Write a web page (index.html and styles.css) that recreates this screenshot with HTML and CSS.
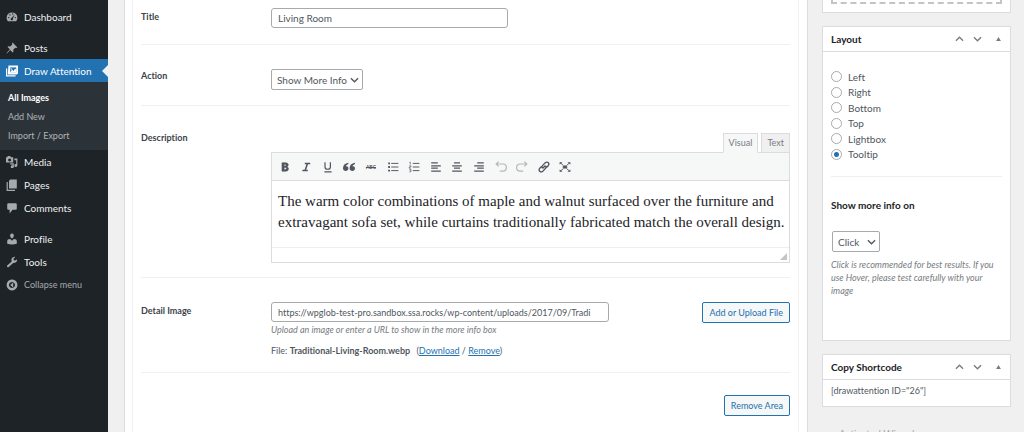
FILE: index.html
```html
<!DOCTYPE html>
<html lang="en">
<head>
<meta charset="utf-8">
<title>Edit Image</title>
<link rel="stylesheet" href="styles.css">
</head>
<body>
<svg class="defs" aria-hidden="true">
  <symbol id="up" viewBox="0 0 10 6"><path d="M1 5l4-4 4 4" fill="none" stroke="currentColor" stroke-width="1.5"/></symbol>
  <symbol id="down" viewBox="0 0 10 6"><path d="M1 1l4 4 4-4" fill="none" stroke="currentColor" stroke-width="1.5"/></symbol>
  <symbol id="tri" viewBox="0 0 6 5"><path d="M3 0l3 5H0z" fill="currentColor"/></symbol>
</svg>
<div class="app">
  <nav class="menu" aria-label="Main menu">
    <a class="item" href="#"><svg viewBox="0 0 20 20"><path d="M3 17a9 9 0 1 1 14 0z"/><g fill="#1d2327"><circle cx="4.500" cy="11" r="1.200"/><circle cx="6.500" cy="6.500" r="1.200"/><circle cx="11" cy="4.800" r="1.200"/><circle cx="15.500" cy="11" r="1.200"/><path d="M14.500 5.500l-3 7a2 2 0 1 1-2.200-1z"/></g></svg>Dashboard</a>
    <a class="item spaced" href="#"><svg viewBox="0 0 20 20"><path d="M11 1l8 8-2 1-1.500-.5-3.500 3.500.5 3-1.500 1.500-4-4L1.500 19 1 18.500 6.500 12 2.500 8.500 4 7l3 .5L10.500 4 10 2.500z"/></svg>Posts</a>
    <a class="item current" href="#"><svg viewBox="0 0 20 20"><path d="M4 1h16v13l-2 2H3z"/><path d="M1 6v12h15" fill="none" stroke="#fff" stroke-width="2"/><path d="M7 4h10v8H7z" fill="#2271b1"/><path d="M7 12l3-4 3 2 2-4 2 2v4zM8 5l3 2-3 1z"/></svg>Draw Attention</a>
    <div class="submenu"><a class="on" href="#">All Images</a><a href="#">Add New</a><a href="#">Import / Export</a></div>
    <a class="item" href="#"><svg viewBox="0 0 20 20"><path fill-rule="evenodd" d="M0 2h2l1-2h4l1 2h4v9H0zM6 4a2.500 2.500 0 1 0 .1 0z"/><path d="M14 4h5v12a2.500 2.500 0 1 1-2-2.500V7h-3zM7 12h6v6a2.500 2.500 0 1 1-2-2.500V14H7z"/></svg>Media</a>
    <a class="item" href="#"><svg viewBox="0 0 20 20"><path d="M7 1h11v15H5V3zM3 5v13h12v2H1V5z"/></svg>Pages</a>
    <a class="item" href="#"><svg viewBox="0 0 20 20"><path d="M4 2h12q2 0 2 2v7q0 2-2 2h-5l-5 6v-6H4q-2 0-2-2V4q0-2 2-2z"/></svg>Comments</a>
    <a class="item spaced" href="#"><svg viewBox="0 0 20 20"><path d="M10 1c5 0 3 8 0 8s-5-8 0-8zM2 18v-4q0-4 5-4l3 3 3-3q5 0 5 4v4q-8 2-16 0z"/></svg>Profile</a>
    <a class="item" href="#"><svg viewBox="0 0 20 20"><path d="M18.500 5.500q.5 6-6.500 6l-7.500 7q-2 1-3-1 0-1 1-2L9.500 9Q8 3 12 2q2-1 3.500-.5L12.500 4.500l.5 2.500 2.500.5z"/></svg>Tools</a>
    <button class="item collapse" type="button"><svg viewBox="0 0 20 20"><path fill-rule="evenodd" d="M10 1a9 9 0 1 0 .1 0zM10 5a5 5 0 1 1-.1 0z"/><path d="M12 6v8l-5-4z"/></svg>Collapse menu</button>
  </nav>
  <main class="main">
    <div class="group">
      <div class="row"><label class="name" for="title">Title</label><div class="field"><input id="title" class="text title" type="text" value="Living Room"></div></div>
      <div class="row action"><label class="name" for="action">Action</label><div class="field"><span class="pick"><select id="action"><option>Show More Info</option></select><svg><use href="#down"/></svg></span></div></div>
      <div class="row description"><span class="name">Description</span>
        <div class="field">
          <div class="tabs"><button class="tab active" type="button">Visual</button><button class="tab" type="button">Text</button></div>
          <div class="editor">
            <div class="toolbar"><div class="tools">
              <button type="button" aria-label="Bold"><svg viewBox="0 0 20 20"><path d="M6 3h5c6 0 5 6 2 6.500 4 1 4 7.500-2 7.500H5V3zM8.500 5.500v3c4 .5 4-3 2-3zM8.500 11v3.500c5 .5 5-3.500 2-3.500z" fill="currentColor" fill-rule="evenodd" stroke="currentColor"/></svg></button>
              <button type="button" aria-label="Italic"><svg viewBox="0 0 20 20"><path d="M8 4h9M4 16h9M12.500 4L8.500 16" stroke-width="2.500"/></svg></button>
              <button type="button" aria-label="Underline"><svg viewBox="0 0 20 20"><path d="M5 2v8c0 5 9 5 9 0V2M4 18h12" stroke-width="2"/></svg></button>
              <button type="button" aria-label="Quote"><svg viewBox="0 0 20 20"><path d="M9 3C3 4 0 7 0 12c0 6 9 6 9 0 0-3-3-4-4-3 0-2 2-3 4-4zM20 3c-6 1-9 4-9 9 0 6 9 6 9 0 0-3-3-4-4-3 0-2 2-3 4-4z" fill="currentColor" stroke="none"/></svg></button>
              <button class="strike" type="button" aria-label="Strikethrough"><s>ABC</s></button>
              <button type="button" aria-label="Bulleted list"><svg viewBox="0 0 20 20"><path d="M7 4h12M7 10h12M7 16h12" stroke-width="1.600"/><path d="M2 4h3M2 10h3M2 16h3" stroke-width="3"/></svg></button>
              <button type="button" aria-label="Numbered list"><svg viewBox="0 0 20 20"><path d="M8 4h11M8 10h11M8 16h11" stroke-width="1.600"/><path d="M2 3l2-1v4M2 8h3v2H2v2h3M2 14h3v4H2M3 16h2" stroke-width="1"/></svg></button>
              <button type="button" aria-label="Align left"><svg viewBox="0 0 20 20"><path d="M2 3h11M2 8h16M2 12h11M2 17h16" stroke-width="2.200"/></svg></button>
              <button type="button" aria-label="Align center"><svg viewBox="0 0 20 20"><path d="M5 3h10M2 8h16M5 12h10M2 17h16" stroke-width="2.200"/></svg></button>
              <button type="button" aria-label="Align right"><svg viewBox="0 0 20 20"><path d="M7 3h11M2 8h16M7 12h11M2 17h16" stroke-width="2.200"/></svg></button>
              <button class="off" type="button" aria-label="Undo"><svg viewBox="0 0 20 20"><path d="M2 5h11c8 0 8 12 0 12H8M6 1L2 5l4 4" stroke-width="2"/></svg></button>
              <button class="off" type="button" aria-label="Redo"><svg viewBox="0 0 20 20"><path d="M18 5H7C-1 5-1 17 7 17h5M14 1l4 4-4 4" stroke-width="2"/></svg></button>
              <button type="button" aria-label="Link"><svg viewBox="0 0 20 20"><path d="M8 12c-3-2-1-4 1-6l3-3c4-3 8 1 5 5l-3 3M12 8c3 2 1 4-1 6l-3 3c-4 3-8-1-5-5l3-3M8 12l4-4" stroke-width="2.200"/></svg></button>
              <button type="button" aria-label="Fullscreen"><svg viewBox="0 0 20 20"><path d="M7 8h6v4H7z" fill="currentColor"/><path d="M2 3l5 4M18 3l-5 4M2 17l5-4M18 17l-5-4" stroke-width="1.500"/><path d="M1 6V2h5zM19 6V2h-5zM1 14v4h5zM19 14v4h-5z" fill="currentColor" stroke="none"/></svg></button>
            </div></div>
            <div class="copy" contenteditable="true" spellcheck="false" role="textbox" aria-label="Description">The warm color combinations of maple and walnut surfaced over the furniture and extravagant sofa set, while curtains traditionally fabricated match the overall design.</div>
            <div class="status"><svg viewBox="0 0 8 8"><path d="M8 0v8H0z" fill="#c3c4c7"/></svg></div>
          </div>
        </div>
      </div>
      <div class="row detail"><label class="name" for="file">Detail Image</label>
        <div class="field">
          <div class="upload"><input id="file" class="text" type="text" value="https://wpglob-test-pro.sandbox.ssa.rocks/wp-content/uploads/2017/09/Tradi"><button class="btn" type="button">Add or Upload File</button></div>
          <p class="hint">Upload an image or enter a URL to show in the more info box</p>
          <p class="file">File: <strong>Traditional-Living-Room.webp</strong> <span class="links">(<a href="#">Download</a> / <a href="#">Remove</a>)</span></p>
        </div>
      </div>
      <div class="foot"><button class="btn" type="button">Remove Area</button></div>
    </div>
  </main>
  <aside class="side">
    <section class="box drop"><div class="dash"></div></section>
    <section class="box layout">
      <header><h2>Layout</h2><button type="button" aria-label="Move up"><svg><use href="#up"/></svg></button><button type="button" aria-label="Move down"><svg><use href="#down"/></svg></button><button type="button" aria-label="Toggle panel"><svg class="tri"><use href="#tri"/></svg></button></header>
      <div class="radios">
        <label><input type="radio" name="layout">Left</label><label><input type="radio" name="layout">Right</label><label><input type="radio" name="layout">Bottom</label><label><input type="radio" name="layout">Top</label><label><input type="radio" name="layout">Lightbox</label><label><input type="radio" name="layout" checked>Tooltip</label>
      </div>
      <div class="event"><label for="event">Show more info on</label><span class="pick"><select id="event"><option>Click</option></select><svg><use href="#down"/></svg></span><p class="hint">Click is recommended for best results. If you use Hover, please test carefully with your image</p></div>
    </section>
    <section class="box">
      <header><h2>Copy Shortcode</h2><button type="button" aria-label="Move up"><svg><use href="#up"/></svg></button><button type="button" aria-label="Move down"><svg><use href="#down"/></svg></button><button type="button" aria-label="Toggle panel"><svg class="tri"><use href="#tri"/></svg></button></header>
      <p class="code">[drawattention ID="26"]</p>
    </section>
    <p class="next">Activated Wizard</p>
  </aside>
</div>
</body>
</html>
```
FILE: styles.css
```css
* { box-sizing: border-box; }
body { margin: 0; background: #f0f0f1; color: #50575e; font: 10px/14px Lato, "Open Sans", sans-serif; font-variant-ligatures: none; }
button, input, select { font: inherit; color: inherit; margin: 0; }
button { padding: 0; border: 0; background: none; }
h2, p { margin: 0; }
a { color: #2271b1; }
.defs { position: absolute; width: 0; height: 0; }
.app { display: flex; height: 100vh; overflow: hidden; }

.menu { flex: 0 0 108px; background: #1d2327; padding-top: 5px; }
.item { display: flex; align-items: center; gap: 6px; width: 100%; height: 23px; padding-left: 6px; color: #f0f0f1; text-decoration: none; white-space: nowrap; }
.item svg { width: 12px; height: 12px; fill: #a7aaad; }
.spaced { margin-top: 8px; }
.current { position: relative; background: #2271b1; color: #fff; }
.current svg { fill: #fff; }
.current::after { content: ""; position: absolute; right: 0; border: 6px solid transparent; border-right-color: #f0f0f1; border-left: 0; }
.submenu { display: grid; background: #2c3338; padding: 6px 8px 5px; font-size: 9px; line-height: 19px; }
.submenu a { color: #b0b4b8; text-decoration: none; }
.submenu .on { color: #fff; font-weight: 700; }
.collapse { color: #a7aaad; font-size: 9px; }

.main { flex: 1; min-width: 0; margin-left: 16px; padding: 0 8px 0 7px; background: #fff; border: solid #dcdcde; border-width: 0 1px; }
.group { height: 100%; padding: 0 8px; border: solid #f0f0f1; border-width: 0 1px; }
.row { display: flex; padding: 8px 0 16px; border-bottom: 1px solid #f0f0f1; }
.name { flex: 0 0 130px; color: #3c434a; font-size: 9px; font-weight: 700; padding-top: 2px; }
.field { flex: 1; min-width: 0; }
.text { height: 20px; border: 1px solid #a7aaad; border-radius: 3px; padding: 0 6px; background: #fff; }
.title { display: block; width: 237px; }
.action { padding: 24px 0 15px; }
.description { padding: 25px 0 14px; }
.action .name, .description .name { padding-top: 0; }
.pick { display: inline-flex; position: relative; vertical-align: top; }
.pick select { appearance: none; height: 21px; border: 1px solid #a7aaad; border-radius: 2px; background: #fff; padding: 0 14px 0 5px; }
.pick svg { position: absolute; right: 4px; top: 8px; width: 9px; height: 6px; pointer-events: none; }
.tabs { display: flex; justify-content: flex-end; gap: 3px; position: relative; margin-bottom: -1px; padding-top: 2px; }
.tab { height: 20px; padding: 0 5px; border: 1px solid #dcdcde; background: #f0f0f1; color: #787c82; font-size: 9px; }
.tab.active { background: #f6f7f7; border-bottom-color: #f6f7f7; }
.editor { border: 1px solid #dcdcde; }
.toolbar { display: flex; height: 28px; align-items: center; padding: 0 4px; background: #f6f7f7; border-bottom: 1px solid #dcdcde; color: #50575e; }
.tools { display: flex; justify-content: space-between; flex: 0 1 298px; }
.toolbar button { display: grid; place-items: center; width: 17px; height: 17px; }
.toolbar svg { width: 12px; height: 12px; fill: none; stroke: currentColor; }
.toolbar .off { color: #b4b7ba; }
.strike { font-size: 5px; font-weight: 700; }
.copy { padding: 10px 0 14px 6px; font: 15px/21px "Liberation Serif", serif; color: #1d2327; outline: 0; }
.status { display: flex; height: 15px; justify-content: flex-end; align-items: flex-end; padding: 2px; border-top: 1px solid #eeeeee; }
.status svg { width: 7px; height: 7px; }
.detail { padding: 24px 0 14px; }
.upload { display: flex; justify-content: space-between; }
.upload .text { width: 338px; font-size: 9px; }
.btn { height: 21px; padding: 0 6px; border: 1px solid #2271b1; border-radius: 2px; background: #f6f7f7; color: #2271b1; font-size: 9px; white-space: nowrap; }
.hint { font-size: 9px; line-height: 13px; font-style: italic; color: #787c82; }
.file { margin-top: 8px; font-size: 9px; }
.links { margin-left: 4px; }
.foot { display: flex; justify-content: flex-end; padding-top: 22px; }

.side { flex: 0 0 216px; padding: 0 13px 0 14px; }
.box { background: #fff; border: 1px solid #dcdcde; margin-bottom: 13px; }
.drop { height: 13px; border-top: 0; padding: 0 8px; }
.dash { height: 4px; border: 2px dashed #c3c4c7; border-top: 0; }
.box header { display: flex; align-items: center; height: 25px; border-bottom: 1px solid #dcdcde; padding: 0 3px 0 8px; color: #787c82; }
.box h2 { flex: 1; font-size: 10px; font-weight: 700; color: #1d2327; }
.box header button { display: grid; place-items: center; width: 18px; height: 18px; }
.box header button:last-child { margin-left: 3px; }
.box header svg { width: 9px; height: 6px; }
.box header .tri { width: 5px; height: 4px; }
.layout { min-height: 315px; }
.radios { display: grid; align-content: space-between; height: 125px; margin: 0 8px; padding: 17px 0 14px; border-bottom: 1px solid #f0f0f1; }
.radios label { display: flex; align-items: center; gap: 6px; height: 15px; }
.radios input { appearance: none; width: 11px; height: 11px; border: 1px solid #a7aaad; border-radius: 50%; background: #fff; }
.radios input:checked { background: radial-gradient(circle, #2271b1 0 2px, #fff 3px); }
.event { padding: 21px 8px 0; }
.event label { display: block; color: #1d2327; font-weight: 700; margin-bottom: 19px; }
.event .pick { margin-left: 1px; }
.event .hint { margin-top: 6px; }
.event select { width: 48px; }
.code { padding: 4px 8px 8px; font-size: 9px; }
.next { padding-left: 17px; margin-top: 19px; color: #a7aaad; }
```
